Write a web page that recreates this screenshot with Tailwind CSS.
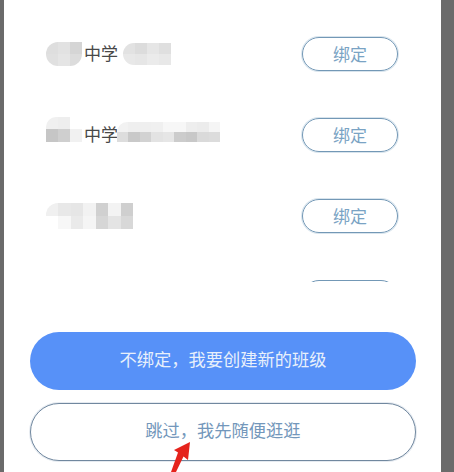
<!DOCTYPE html>
<html lang="zh-CN">
<head>
    <meta charset="UTF-8">
    <title>绑定学校</title>
    <script src="https://cdn.jsdelivr.net/npm/@tailwindcss/browser@4"></script>
</head>
<body class="bg-[#6b6b6b] font-['Liberation_Sans','Noto_Sans_CJK_SC',sans-serif]">
    <div class="relative w-[454px] h-[472px] overflow-hidden flex">
        <div class="w-[4px] shrink-0"></div>

        <!-- Panel -->
        <main class="w-[437px] h-[472px] bg-white shrink-0">
            <!-- School list -->
            <ul class="h-[282px] overflow-hidden pt-[37px] pl-[42px] pr-[43px] flex flex-col gap-[47px]">
                <li class="flex items-center justify-between shrink-0 h-[34px]">
                    <div class="flex items-center">
                        <div class="grid grid-cols-3 w-[36px] h-[24px] rounded-l-[12px] rounded-br-[12px] overflow-hidden">
                            <div class="bg-[#dedede]"></div><div class="bg-[#e2e2e2]"></div><div class="bg-[#d5d5d5]"></div>
                            <div class="bg-[#e0e0e0]"></div><div class="bg-[#e5e5e5]"></div><div class="bg-[#dcdcdc]"></div>
                        </div>
                        <span class="ml-[2px] pt-[1px] text-[17px] leading-[24px] text-[#484848]">中学</span>
                        <div class="ml-[5px] grid grid-cols-4 w-[48px] h-[22px] rounded-l-[11px] overflow-hidden">
                            <div class="bg-[#e2e2e2]"></div><div class="bg-[#dcdcdc]"></div><div class="bg-[#e6e6e6]"></div><div class="bg-[#dfdfdf]"></div>
                            <div class="bg-[#e8e8e8]"></div><div class="bg-[#e6e6e6]"></div><div class="bg-[#ebebeb]"></div><div class="bg-[#e8e8e8]"></div>
                        </div>
                    </div>
                    <button class="w-[96px] h-[34px] pt-[3px] rounded-full border border-[#7398b6] shadow-[0_0_0_1px_rgba(126,166,196,0.3)] text-[17px] text-[#7aa3c4]">绑定</button>
                </li>
                <li class="flex items-center justify-between shrink-0 h-[34px]">
                    <div class="flex items-center">
                        <div class="grid grid-cols-3 w-[36px] h-[25px] mb-[12px] rounded-tl-[10px] rounded-tr-[12px] overflow-hidden">
                            <div class="bg-[#f0f0f0]"></div><div class="bg-[#eeeeee]"></div><div class="bg-white"></div>
                            <div class="bg-[#c6c6c6]"></div><div class="bg-[#cfcfcf]"></div><div class="bg-[#f1f1f1]"></div>
                        </div>
                        <span class="ml-[2px] pt-[1px] text-[17px] leading-[24px] text-[#484848]">中学</span>
                        <div class="-ml-[1px] mb-[7px] grid grid-cols-9 w-[103px] h-[20px] rounded-tl-[10px] overflow-hidden">
                            <div class="bg-[#f2f2f2]"></div><div class="bg-[#efefef]"></div><div class="bg-[#efefef]"></div><div class="bg-[#f0f0f0]"></div><div class="bg-[#f7f7f7]"></div><div class="bg-[#f7f7f7]"></div><div class="bg-[#eeeeee]"></div><div class="bg-[#ececec]"></div><div class="bg-[#f5f5f5]"></div>
                            <div class="bg-[#dddddd]"></div><div class="bg-[#c9c9c9]"></div><div class="bg-[#d2d2d2]"></div><div class="bg-[#e3e3e3]"></div><div class="bg-[#e6e6e6]"></div><div class="bg-[#cccccc]"></div><div class="bg-[#c8c8c8]"></div><div class="bg-[#dadada]"></div><div class="bg-[#dcdcdc]"></div>
                        </div>
                    </div>
                    <button class="w-[96px] h-[34px] pt-[3px] rounded-full border border-[#7398b6] shadow-[0_0_0_1px_rgba(126,166,196,0.3)] text-[17px] text-[#7aa3c4]">绑定</button>
                </li>
                <li class="flex items-center justify-between shrink-0 h-[34px]">
                    <div class="grid grid-cols-7 w-[87px] h-[26px] rounded-tl-[12px] overflow-hidden">
                        <div class="bg-[#f0f0f0]"></div><div class="bg-[#e8e8e8]"></div><div class="bg-[#e6e6e6]"></div><div class="bg-[#f2f2f2]"></div><div class="bg-[#d0d0d0]"></div><div class="bg-[#f3f3f3]"></div><div class="bg-[#cfcfcf]"></div>
                        <div class="bg-white"></div><div class="bg-[#f7f7f7]"></div><div class="bg-[#eaeaea]"></div><div class="bg-[#f5f5f5]"></div><div class="bg-[#d6d6d6]"></div><div class="bg-[#e4e4e4]"></div><div class="bg-[#d8d8d8]"></div>
                    </div>
                    <button class="w-[96px] h-[34px] pt-[3px] rounded-full border border-[#7398b6] shadow-[0_0_0_1px_rgba(126,166,196,0.3)] text-[17px] text-[#7aa3c4]">绑定</button>
                </li>
                <li class="flex items-center justify-end shrink-0 h-[34px]">
                    <button class="w-[96px] h-[34px] rounded-full border border-[#7398b6]"></button>
                </li>
            </ul>

            <!-- Actions -->
            <div class="mt-[50px] ml-[26px] w-[386px] flex flex-col gap-[13px]">
                <button class="h-[58px] rounded-full bg-[#5791f8] text-[17.25px] text-[#e8f0fb]">不绑定，我要创建新的班级</button>
                <button class="h-[58px] rounded-full border border-[#71889f] shadow-[0_0_0_1px_rgba(126,151,178,0.2)] bg-white text-[17.25px] text-[#7397bb]">跳过，我先随便逛逛</button>
            </div>
        </main>

        <div class="flex-1"></div>

        <!-- Red annotation arrow -->
        <svg class="absolute left-[165px] top-[438px]" width="32" height="34" viewBox="0 0 32 34">
            <path d="M25 4 L23 22 L18.5 18.5 L11 34 L6 34 L13 14.5 L9 12 Z" fill="#e5231c"/>
        </svg>
    </div>
</body>
</html>
